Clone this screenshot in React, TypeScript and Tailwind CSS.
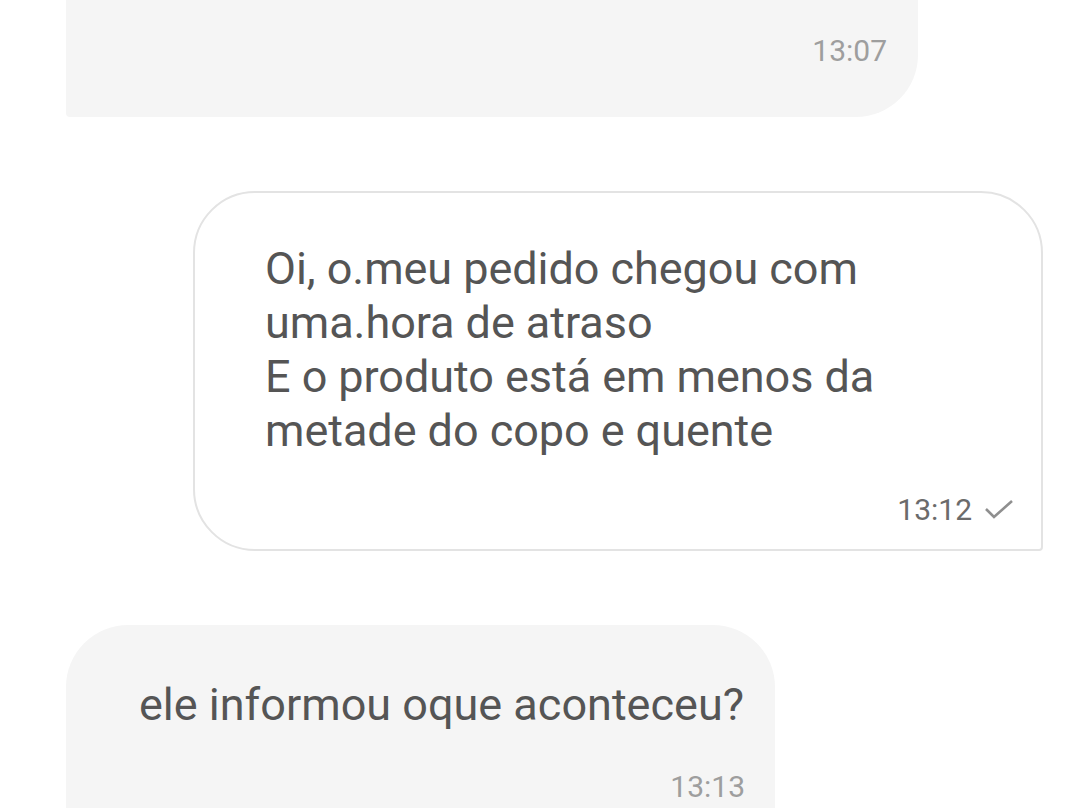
import { FC } from 'react'

const Check: FC = () => (
  <svg width="30" height="22" viewBox="0 0 30 22" className="ml-[12px] mb-[3px]">
    <path d="M2 11 L10 19 L28 3" fill="none" stroke="#8f8f8f" strokeWidth="2.6" />
  </svg>
)

const App: FC = () => {
  return (
    <div className="h-[808px] w-[1080px] overflow-hidden bg-white font-['Roboto',sans-serif]">
      {/* received */}
      <div className="ml-[66px] w-[852px] rounded-br-[62px] rounded-bl-[4px] bg-[#f5f5f5] pt-[33px] pb-[48px] pr-[31px] text-right text-[30px] leading-[36px] text-[#9e9e9e]">
        13:07
      </div>

      {/* sent */}
      <div className="mt-[74px] ml-[193px] w-[850px] rounded-tl-[62px] rounded-tr-[62px] rounded-bl-[62px] rounded-br-[4px] border-2 border-[#e3e3e3] pt-[49px] pb-[21px] pl-[70px] pr-[27px]">
        <p className="text-[45px] leading-[54px] tracking-[-0.05px] text-[#555555]">
          Oi, o.meu pedido chegou com
          <br />
          uma.hora de atraso
          <br />
          E o produto está em menos da
          <br />
          metade do copo e quente
        </p>
        <div className="mt-[34px] flex items-center justify-end text-[30px] leading-[36px] text-[#6b6b6b]">
          <span>13:12</span>
          <Check />
        </div>
      </div>

      {/* received */}
      <div className="mt-[74px] ml-[66px] w-[709px] rounded-tl-[62px] rounded-tr-[62px] bg-[#f5f5f5] pt-[53px] pl-[73px] pr-[30px] pb-[40px]">
        <p className="text-[45px] leading-[54px] text-[#555555]">ele informou oque aconteceu?</p>
        <div className="mt-[37px] text-right text-[30px] leading-[36px] text-[#9e9e9e]">13:13</div>
      </div>
    </div>
  )
}

export default App
